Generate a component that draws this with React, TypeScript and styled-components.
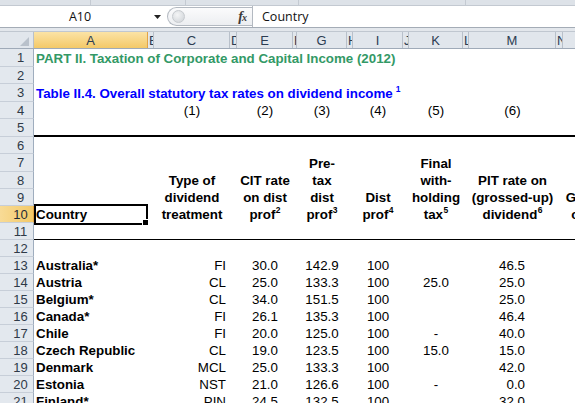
import React from 'react';
import styled, { createGlobalStyle } from 'styled-components';

const GlobalStyle = createGlobalStyle`
  html, body {
    margin: 0;
    padding: 0;
    background: #ffffff;
    overflow: hidden;
  }
  body {
    font-family: 'Liberation Sans', Arial, sans-serif;
  }
`;

const COLS = [
  { key: 'A', w: 114 },
  { key: 'B', w: 6 },
  { key: 'C', w: 76 },
  { key: 'D', w: 7 },
  { key: 'E', w: 56 },
  { key: 'F', w: 4 },
  { key: 'G', w: 50 },
  { key: 'H', w: 6 },
  { key: 'I', w: 50 },
  { key: 'J', w: 6 },
  { key: 'K', w: 54 },
  { key: 'L', w: 6 },
  { key: 'M', w: 87 },
  { key: 'N', w: 7 },
  { key: 'O', w: 44 },
];

const Sheet = styled.div`
  width: 575px;
  height: 403px;
  overflow: hidden;
  background: #ffffff;
  display: flex;
  flex-direction: column;
`;

const RibbonEdge = styled.div`
  height: 6px;
  flex: 0 0 6px;
  display: flex;
  background: #dde2e8;
  border-bottom: 1px solid #c3c9d1;
  box-sizing: border-box;
`;

const RibbonGroup = styled.div<{ $w: number }>`
  flex: 0 0 ${(p) => p.$w}px;
  border-right: 1px solid #c4cad2;
  box-sizing: border-box;
`;

const FormulaBar = styled.div`
  height: 21px;
  flex: 0 0 21px;
  display: flex;
  align-items: stretch;
  background: #ffffff;
`;

const NameBox = styled.div`
  flex: 0 0 167px;
  display: flex;
  align-items: center;
  font-family: 'Open Sans', 'Liberation Sans', sans-serif;
  font-size: 12.5px;
  color: #111;
`;

const NameText = styled.span`
  flex: 1;
  text-align: center;
  padding-left: 6px;
`;

const DropArrow = styled.svg`
  width: 7px;
  height: 4px;
  margin-right: 6px;
`;

const FxPill = styled.div`
  flex: 0 0 85px;
  margin: 1px 0 0;
  height: 19px;
  box-sizing: border-box;
  border: 1px solid #b3b9c1;
  border-right: none;
  border-radius: 10px 0 0 10px;
  background: linear-gradient(#fbfbfc, #eceef1);
  display: flex;
  align-items: center;
  justify-content: space-between;
  padding: 0 6px 0 4px;
`;

const Dimple = styled.div`
  width: 11px;
  height: 11px;
  border-radius: 50%;
  background: radial-gradient(circle at 40% 35%, #f4f5f6, #cdd1d6);
  border: 1px solid #c6cace;
`;

const FxLabel = styled.span`
  font-family: 'Liberation Serif', 'Times New Roman', serif;
  font-style: italic;
  font-weight: bold;
  font-size: 14px;
  color: #3a3a3a;
  letter-spacing: -1px;
  & small {
    font-size: 10px;
  }
`;

const FormulaInput = styled.div`
  flex: 1;
  border-left: 1px solid #b3b9c1;
  display: flex;
  align-items: center;
  padding-left: 9px;
  font-family: 'Open Sans', 'Liberation Sans', sans-serif;
  font-size: 12.5px;
  color: #111;
`;

const HeaderBand = styled.div`
  height: 5px;
  flex: 0 0 5px;
  box-sizing: border-box;
  background: #e3e7ec;
  border-top: 1px solid #a4acb6;
  border-bottom: 1px solid #c0c7d0;
`;

const ColumnHeaderRow = styled.div`
  height: 16px;
  flex: 0 0 16px;
  display: flex;
  background: #e1e6ec;
  border-bottom: 1px solid #9faab8;
  box-sizing: content-box;
`;

const CornerCell = styled.div`
  flex: 0 0 34px;
  box-sizing: border-box;
  border-right: 1px solid #b8c0ca;
  display: flex;
  align-items: flex-end;
  justify-content: flex-end;
  padding: 0 4px 2px 0;
`;

const ColHead = styled.div<{ $w: number; $active?: boolean }>`
  flex: 0 0 ${(p) => p.$w}px;
  width: ${(p) => p.$w}px;
  box-sizing: border-box;
  border-right: 1px solid ${(p) => (p.$active ? '#e2a346' : '#b8c0ca')};
  background: ${(p) => (p.$active ? 'linear-gradient(#fbe3a6, #f4c968)' : 'transparent')};
  display: flex;
  align-items: center;
  justify-content: ${(p) => (p.$w < 14 ? 'flex-start' : 'center')};
  padding-left: ${(p) => (p.$w < 14 ? 1 : 0)}px;
  overflow: hidden;
  font-size: 13px;
  color: #2c3d52;
`;

const Grid = styled.div`
  display: flex;
  flex-direction: column;
`;

const GridRow = styled.div<{ $h: number }>`
  display: flex;
  height: ${(p) => p.$h}px;
  flex: 0 0 ${(p) => p.$h}px;
`;

const RowHead = styled.div<{ $active?: boolean }>`
  flex: 0 0 34px;
  box-sizing: border-box;
  padding-left: 8px;
  display: flex;
  align-items: center;
  justify-content: center;
  font-size: 13px;
  color: ${(p) => (p.$active ? '#1f2a38' : '#2f3a48')};
  background: ${(p) => (p.$active ? 'linear-gradient(90deg, #f8db96, #f3c968)' : '#e3e8ee')};
  border-right: 1px solid ${(p) => (p.$active ? '#e2a346' : '#9fadbe')};
  border-bottom: 1px solid #c7ced8;
`;

const RowBody = styled.div<{ $rule?: 'thick' | 'thin' }>`
  flex: 1;
  display: flex;
  box-sizing: border-box;
  border-bottom: ${(p) =>
    p.$rule === 'thick' ? '2px solid #000' : p.$rule === 'thin' ? '1px solid #000' : 'none'};
`;

const Cell = styled.div<{
  $w: number;
  $align: 'left' | 'center' | 'right';
  $padL: number;
  $padR: number;
  $bold?: boolean;
}>`
  flex: 0 0 ${(p) => p.$w}px;
  width: ${(p) => p.$w}px;
  box-sizing: border-box;
  position: relative;
  display: flex;
  align-items: center;
  justify-content: ${(p) =>
    p.$align === 'left' ? 'flex-start' : p.$align === 'right' ? 'flex-end' : 'center'};
  padding: 0 ${(p) => p.$padR}px 0 ${(p) => p.$padL}px;
  white-space: nowrap;
  overflow: visible;
  font-size: 13.33px;
  font-weight: ${(p) => (p.$bold ? 700 : 400)};
  color: #000;
`;

const CellText = styled.span`
  display: inline-block;
  white-space: nowrap;
`;

const GreenTitle = styled.span`
  color: #339966;
  font-weight: 700;
`;

const BlueTitle = styled.span`
  color: #0000ff;
  font-weight: 700;
  & sup {
    margin-left: 3px;
  }
`;

const Sup = styled.sup`
  font-size: 8.5px;
  line-height: 0;
  vertical-align: 6px;
  margin-left: 0.5px;
`;

const Selection = styled.div`
  position: absolute;
  top: -2px;
  left: 0;
  right: 0;
  bottom: -2px;
  border: 2px solid #000;
  pointer-events: none;
`;

const FillHandle = styled.div`
  position: absolute;
  right: -3px;
  bottom: -3px;
  width: 5px;
  height: 5px;
  background: #000;
  border: 1px solid #fff;
`;

type Align = 'left' | 'center' | 'right';
type CellSpec = { text: React.ReactNode; align?: Align; bold?: boolean; padL?: number; padR?: number };
type RowSpec = { rule?: 'thick' | 'thin'; cells: Partial<Record<string, CellSpec>> };

const ROW_HEIGHTS = [18, 17, 18, 17, 18, 17, 18, 17, 17, 17, 17, 17, 17, 17, 17, 17, 17, 17, 17, 17, 17];

const head = (text: React.ReactNode): CellSpec => ({ text, align: 'center', bold: true });
const num = (text: string): CellSpec => ({ text, align: 'center' });

const countries: [string, string, string, string, string, string, string][] = [
  ['Australia*', 'FI', '30.0', '142.9', '100', '', '46.5'],
  ['Austria', 'CL', '25.0', '133.3', '100', '25.0', '25.0'],
  ['Belgium*', 'CL', '34.0', '151.5', '100', '', '25.0'],
  ['Canada*', 'FI', '26.1', '135.3', '100', '', '46.4'],
  ['Chile', 'FI', '20.0', '125.0', '100', '-', '40.0'],
  ['Czech Republic', 'CL', '19.0', '123.5', '100', '15.0', '15.0'],
  ['Denmark', 'MCL', '25.0', '133.3', '100', '', '42.0'],
  ['Estonia', 'NST', '21.0', '126.6', '100', '-', '0.0'],
  ['Finland*', 'PIN', '24.5', '132.5', '100', '', '32.0'],
];

const ROWS: RowSpec[] = [
  {
    cells: {
      A: { text: <GreenTitle>PART II. Taxation of Corporate and Capital Income (2012)</GreenTitle> },
    },
  },
  { cells: {} },
  {
    cells: {
      A: {
        text: (
          <BlueTitle>
            Table II.4. Overall statutory tax rates on dividend income<Sup>1</Sup>
          </BlueTitle>
        ),
      },
    },
  },
  {
    cells: {
      C: num('(1)'),
      E: num('(2)'),
      G: num('(3)'),
      I: num('(4)'),
      K: num('(5)'),
      M: num('(6)'),
      O: num('(7)'),
    },
  },
  { rule: 'thick', cells: {} },
  { cells: {} },
  { cells: { G: head('Pre-'), K: head('Final') } },
  {
    cells: {
      C: head('Type of'),
      E: head('CIT rate'),
      G: head('tax'),
      K: head('with-'),
      M: head('PIT rate on'),
    },
  },
  {
    cells: {
      C: head('dividend'),
      E: head('on dist'),
      G: head('dist'),
      I: head('Dist'),
      K: head('holding'),
      M: head('(grossed-up)'),
      O: head('Gross'),
    },
  },
  {
    cells: {
      A: { text: 'Country', bold: true },
      C: head('treatment'),
      E: head(<>prof<Sup>2</Sup></>),
      G: head(<>prof<Sup>3</Sup></>),
      I: head(<>prof<Sup>4</Sup></>),
      K: head(<>tax<Sup>5</Sup></>),
      M: head(<>dividend<Sup>6</Sup></>),
      O: head('cost'),
    },
  },
  { rule: 'thin', cells: {} },
  { cells: {} },
  ...countries.map(([name, type, cit, pre, dist, wht, pit]) => ({
    cells: {
      A: { text: name, bold: true },
      C: { text: type, align: 'right' as Align, padR: 4 },
      E: num(cit),
      G: num(pre),
      I: num(dist),
      K: num(wht),
      M: { text: pit, align: 'right' as Align, padR: 31 },
    },
  })),
];

const SELECTED_ROW = 10;

const App: React.FC = () => {
  return (
    <>
      <GlobalStyle />
      <Sheet>
        <RibbonEdge>
          <RibbonGroup $w={91} />
          <RibbonGroup $w={95} />
          <RibbonGroup $w={113} />
          <RibbonGroup $w={167} />
        </RibbonEdge>

        <FormulaBar>
          <NameBox>
            <NameText>A10</NameText>
            <DropArrow viewBox="0 0 7 4">
              <path d="M0 0 H7 L3.5 4 Z" fill="#222" />
            </DropArrow>
          </NameBox>
          <FxPill>
            <Dimple />
            <FxLabel>
              f<small>x</small>
            </FxLabel>
          </FxPill>
          <FormulaInput>Country</FormulaInput>
        </FormulaBar>

        <HeaderBand />

        <ColumnHeaderRow>
          <CornerCell>
            <svg width="9" height="9" viewBox="0 0 9 9">
              <path d="M9 0 V9 H0 Z" fill="#b9c1cb" />
            </svg>
          </CornerCell>
          {COLS.map((c) => (
            <ColHead key={c.key} $w={c.w} $active={c.key === 'A'}>
              {c.key}
            </ColHead>
          ))}
        </ColumnHeaderRow>

        <Grid>
          {ROWS.map((row, i) => {
            const n = i + 1;
            return (
              <GridRow key={n} $h={ROW_HEIGHTS[i]}>
                <RowHead $active={n === SELECTED_ROW}>{n}</RowHead>
                <RowBody $rule={row.rule}>
                  {COLS.map((c) => {
                    const spec = row.cells[c.key];
                    const isA = c.key === 'A';
                    return (
                      <Cell
                        key={c.key}
                        $w={c.w}
                        $align={spec?.align ?? 'left'}
                        $padL={spec?.padL ?? (isA ? 2 : 0)}
                        $padR={spec?.padR ?? 0}
                        $bold={spec?.bold}
                      >
                        {spec && <CellText>{spec.text}</CellText>}
                        {isA && n === SELECTED_ROW && (
                          <Selection>
                            <FillHandle />
                          </Selection>
                        )}
                      </Cell>
                    );
                  })}
                </RowBody>
              </GridRow>
            );
          })}
        </Grid>
      </Sheet>
    </>
  );
};

export default App;
